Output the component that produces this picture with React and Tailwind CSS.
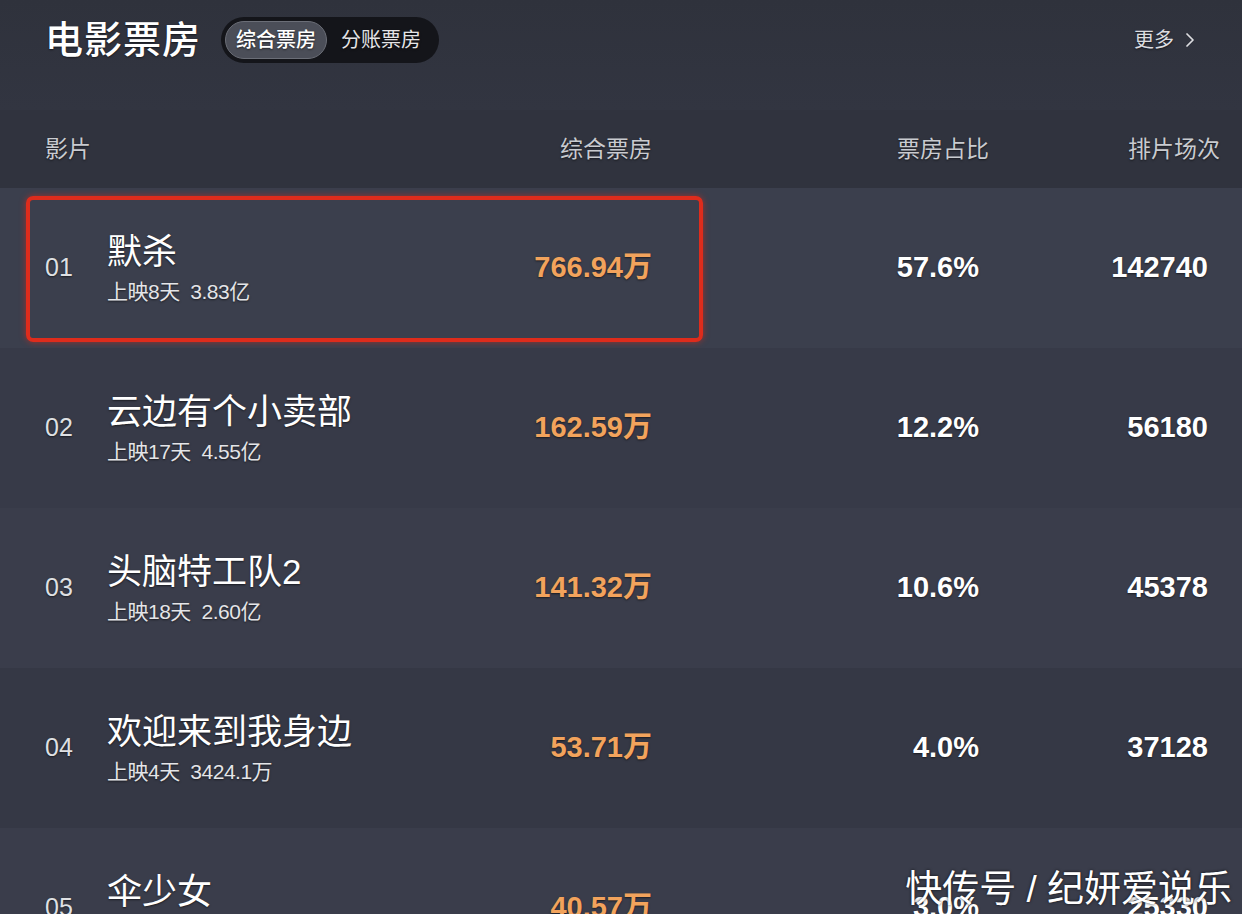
import { ChevronRight } from "lucide-react";

// 票房数据
const movies = [
  { rank: "01", name: "默杀", days: "上映8天", total: "3.83亿", box: "766.94万", rate: "57.6%", shows: "142740", bg: "bg-[#3b3f4d]" },
  { rank: "02", name: "云边有个小卖部", days: "上映17天", total: "4.55亿", box: "162.59万", rate: "12.2%", shows: "56180", bg: "bg-[#373a48]" },
  { rank: "03", name: "头脑特工队2", days: "上映18天", total: "2.60亿", box: "141.32万", rate: "10.6%", shows: "45378", bg: "bg-[#3a3d4b]" },
  { rank: "04", name: "欢迎来到我身边", days: "上映4天", total: "3424.1万", box: "53.71万", rate: "4.0%", shows: "37128", bg: "bg-[#353845]" },
  { rank: "05", name: "伞少女", days: "上映11天", total: "1.02亿", box: "40.57万", rate: "3.0%", shows: "25330", bg: "bg-[#3a3d4b]" },
];

const shadow = "[text-shadow:0_1px_2px_rgba(0,0,0,0.55)]";

const App = () => {
  return (
    <div className="relative w-[1242px] h-[914px] overflow-hidden bg-[#31343f] font-['Liberation_Sans','Noto_Sans_CJK_SC',sans-serif] text-white">
      {/* Header */}
      <div className="flex items-center h-[110px] pb-[30px] pl-[45px] pr-[40px] bg-gradient-to-b from-[#2f323c] to-[#323541]">
        <h1 className={`text-[38px] leading-none font-medium tracking-[1px] ${shadow}`}>电影票房</h1>
        <div className="ml-[20px] flex items-center h-[46px] p-[4px] rounded-full bg-[#14151a]">
          <button className={`h-[38px] px-[10px] rounded-full bg-[#4b4e58] border border-[#6b6e77] text-[20px] font-medium ${shadow}`}>
            综合票房
          </button>
          <button className={`h-[38px] px-[14px] text-[20px] text-[#e4e4e6] ${shadow}`}>分账票房</button>
        </div>
        <div className={`ml-auto flex items-center gap-[4px] text-[20px] text-[#dcdde0] ${shadow}`}>
          更多
          <ChevronRight className="w-[24px] h-[24px]" strokeWidth={1.75} />
        </div>
      </div>

      {/* Column header */}
      <div className={`flex items-center h-[78px] pl-[45px] bg-[#30333e] text-[23px] text-[#c9cbd0] ${shadow}`}>
        <div className="w-[462px]">影片</div>
        <div className="w-[145px] text-right">综合票房</div>
        <div className="w-[337px] text-right">票房占比</div>
        <div className="w-[231px] text-right">排片场次</div>
      </div>

      {/* Rows */}
      {movies.map((m, i) => (
        <div key={m.rank} className={`relative flex items-center h-[160px] pl-[45px] ${m.bg}`}>
          {i === 0 && (
            <div className="absolute left-[26px] top-[8px] w-[677px] h-[146px] rounded-[7px] border-[4px] border-[#de2c1c] shadow-[0_0_6px_rgba(222,44,28,0.6)]" />
          )}
          <div className={`w-[62px] text-[25px] text-[#dfe0e3] ${shadow}`}>{m.rank}</div>
          <div className="w-[400px]">
            <div className={`text-[35px] leading-[38px] ${shadow}`}>{m.name}</div>
            <div className={`mt-[9px] text-[21px] leading-[23px] tracking-[-0.5px] text-[#e4e5e8] ${shadow}`}>
              {m.days}&nbsp;&nbsp;{m.total}
            </div>
          </div>
          <div className={`w-[145px] text-right text-[29px] font-semibold text-[#f2a35c] ${shadow}`}>{m.box}</div>
          <div className={`w-[327px] text-right text-[29px] font-semibold ${shadow}`}>{m.rate}</div>
          <div className={`w-[229px] text-right text-[29px] font-semibold ${shadow}`}>{m.shows}</div>
        </div>
      ))}

      {/* Watermark */}
      <div className="absolute right-[10px] bottom-[2px] text-[37px] leading-[44px] text-white [text-shadow:0_0_3px_rgba(0,0,0,0.8)]">
        快传号 / 纪妍爱说乐
      </div>
    </div>
  );
};

export default App;
